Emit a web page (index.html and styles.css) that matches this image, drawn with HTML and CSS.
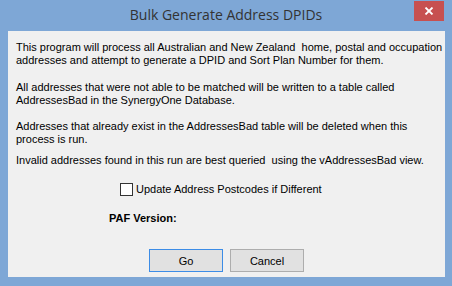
FILE: index.html
```html
<!DOCTYPE html>
<html>
<head>
<meta charset="utf-8">
<link rel="stylesheet" href="styles.css">
</head>
<body>
<div class="window">
  <div class="titlebar">
    <div class="title">Bulk Generate Address DPIDs</div>
    <div class="close">
      <svg width="10" height="8" viewBox="0 0 10 8"><path d="M1.5 0.5 L8.5 7.5 M8.5 0.5 L1.5 7.5" stroke="#fff" stroke-width="1.8" fill="none"/></svg>
    </div>
  </div>
  <div class="client">
    <p class="para p1">This program will process all Australian and New Zealand&nbsp; home, postal and occupation<br>addresses and attempt to generate a DPID and Sort Plan Number for them.</p>
    <p class="para p2">All addresses that were not able to be matched will be written to a table called<br>AddressesBad in the SynergyOne Database.</p>
    <p class="para p3">Addresses that already exist in the AddressesBad table will be deleted when this<br>process is run.</p>
    <p class="para p4">Invalid addresses found in this run are best queried&nbsp; using the vAddressesBad view.</p>
    <div class="check-row">
      <span class="checkbox"></span>
      <span class="check-label">Update Address Postcodes if Different</span>
    </div>
    <div class="paf">PAF Version:</div>
    <div class="buttons">
      <button class="btn btn-default">Go</button>
      <button class="btn">Cancel</button>
    </div>
  </div>
</div>
</body>
</html>
```

FILE: styles.css
```css
html, body {
  margin: 0;
  padding: 0;
}
body {
  background: #7ba4d4;
}
.window {
  width: 452px;
  height: 286px;
  background: #7ea7d6;
  display: flex;
  flex-direction: column;
  box-sizing: border-box;
}
.titlebar {
  height: 31px;
  display: grid;
  grid-template-columns: 1fr auto 1fr;
  flex: none;
}
.title {
  grid-column: 2;
  font-family: "Open Sans", "Noto Sans", sans-serif;
  font-size: 14px;
  color: #333;
  line-height: 20px;
  padding-top: 5px;
  white-space: nowrap;
}
.close {
  grid-column: 3;
  justify-self: end;
  width: 30px;
  height: 20px;
  margin-top: 1px;
  margin-right: 8px;
  background: #c75050;
  display: flex;
  align-items: center;
  justify-content: center;
}
.close svg {
  display: block;
}
.client {
  margin: 0 7px 0 8px;
  height: 246px;
  background: #f0f0f0;
  box-sizing: border-box;
  padding: 10px 0 0 8px;
  font-family: "Liberation Sans", Arial, sans-serif;
  font-size: 11px;
  line-height: 13px;
  color: #000;
}
.para {
  margin: 0;
  white-space: nowrap;
}
.p2 { margin-top: 14px; }
.p3 { margin-top: 13px; }
.p4 { margin-top: 8px; }
.check-row {
  display: flex;
  align-items: center;
  margin-top: 16px;
  padding-left: 104px;
  height: 13px;
}
.checkbox {
  width: 11px;
  height: 11px;
  border: 1px solid #333;
  background: #fff;
  flex: none;
}
.check-label {
  margin-left: 3px;
  line-height: 13px;
}
.paf {
  margin-top: 16px;
  padding-left: 93px;
  font-weight: bold;
}
.buttons {
  display: flex;
  gap: 7px;
  margin-top: 24px;
  padding-left: 133px;
}
.btn {
  width: 74px;
  height: 23px;
  box-sizing: border-box;
  background: #e1e1e1;
  border: 1px solid #adadad;
  font-family: "Liberation Sans", Arial, sans-serif;
  font-size: 11px;
  color: #000;
  padding: 0;
  margin: 0;
}
.btn-default {
  border-color: #3c8ce6;
}
```
